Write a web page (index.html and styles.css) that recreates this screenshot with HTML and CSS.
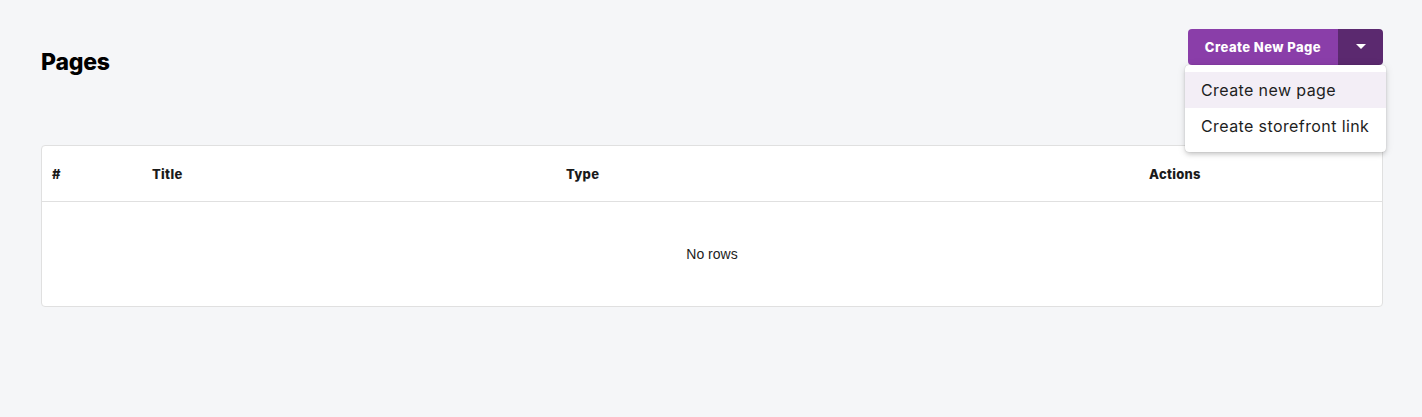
FILE: index.html
```html
<!DOCTYPE html>
<html lang="en">
<head>
<meta charset="utf-8">
<title>Pages</title>
<link rel="stylesheet" href="styles.css">
</head>
<body>
<div class="page">
  <header class="page-header">
    <h1 class="page-title">Pages</h1>
    <div class="split">
      <div class="split-buttons">
        <button class="split-main" type="button">Create New Page</button>
        <button class="split-toggle" type="button" aria-label="More options">
          <svg width="10" height="5" viewBox="0 0 10 5"><path d="M0 0h10L5 5z" fill="#fff"/></svg>
        </button>
      </div>
      <ul class="menu">
        <li class="menu-item active">Create new page</li>
        <li class="menu-item">Create storefront link</li>
      </ul>
    </div>
  </header>

  <section class="grid">
    <div class="grid-head">
      <div class="cell c-num">#</div>
      <div class="cell c-title">Title</div>
      <div class="cell c-type">Type</div>
      <div class="cell c-actions">Actions</div>
    </div>
    <div class="grid-body">
      <span class="empty">No rows</span>
    </div>
  </section>
</div>
</body>
</html>
```

FILE: styles.css
```css
* { box-sizing: border-box; }

html, body {
  margin: 0;
  padding: 0;
  background: #f5f6f8;
}

body {
  font-family: Inter, "Open Sans", Arial, sans-serif;
  color: #111;
}

.page {
  padding: 29px 39px 0 41px;
}

.page-header {
  display: flex;
  justify-content: space-between;
  align-items: flex-start;
}

.page-title {
  margin: 19px 0 0;
  font-size: 23px;
  font-weight: 800;
  line-height: 28px;
  color: #000;
  letter-spacing: -0.2px;
}

.split {
  position: relative;
}

.split-buttons {
  display: flex;
  height: 36px;
  border-radius: 4px;
  overflow: hidden;
}

.split-main {
  border: 0;
  margin: 0;
  width: 150px;
  background: #8a3ea9;
  color: #fff;
  font-family: Inter, "Open Sans", Arial, sans-serif;
  font-weight: 800;
  font-size: 13px;
  letter-spacing: 0.45px;
  padding: 0;
  cursor: pointer;
}

.split-toggle {
  border: 0;
  margin: 0;
  width: 45px;
  background: #5b296f;
  display: flex;
  align-items: center;
  justify-content: center;
  padding: 0 0 1px;
  cursor: pointer;
}

.menu {
  position: absolute;
  top: 36px;
  left: -3px;
  width: 201px;
  margin: 0;
  padding: 7px 0 8px;
  list-style: none;
  background: #fff;
  border-radius: 4px;
  box-shadow: 0 3px 5px -1px rgba(0,0,0,0.18), 0 1px 8px 0 rgba(0,0,0,0.10), 0 0 1px rgba(0,0,0,0.25);
  z-index: 2;
}

.menu-item {
  height: 36px;
  display: flex;
  align-items: center;
  padding: 0 16px;
  font-size: 16px;
  letter-spacing: 0.4px;
  color: #1e1e1e;
  white-space: nowrap;
}

.menu-item.active {
  background: #f3eef6;
}

.grid {
  margin-top: 69px;
  background: #fff;
  border: 1px solid #e0e0e0;
  border-radius: 4px;
}

.grid-head {
  display: flex;
  height: 56px;
  align-items: center;
  border-bottom: 1px solid #e0e0e0;
}

.cell {
  padding: 0 10px;
  font-size: 13px;
  font-weight: 800;
  letter-spacing: 0.3px;
  color: #1a1a1a;
}

.c-num { width: 100px; }
.c-title { width: 414px; }
.c-type { width: 583px; }
.c-actions { flex: 1; }

.grid-body {
  height: 104px;
  display: flex;
  align-items: center;
  justify-content: center;
}

.empty {
  font-family: "Liberation Sans", Arial, sans-serif;
  font-size: 14px;
  color: #222;
}
```
